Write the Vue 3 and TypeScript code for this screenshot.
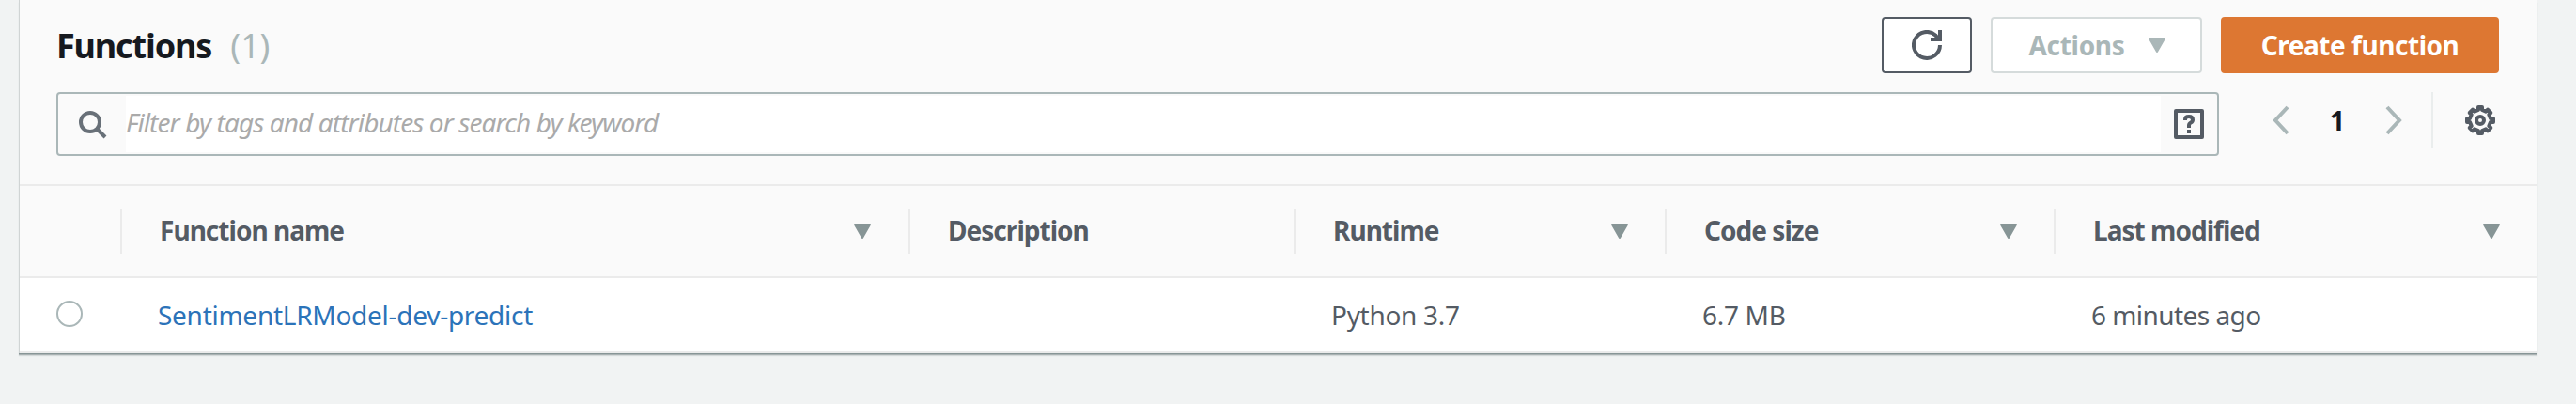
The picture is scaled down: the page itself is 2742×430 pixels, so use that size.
<script setup lang="ts">
interface Column {
  key: string
  label: string
  sortable: boolean
}

const columns: Column[] = [
  { key: 'name', label: 'Function name', sortable: true },
  { key: 'description', label: 'Description', sortable: false },
  { key: 'runtime', label: 'Runtime', sortable: true },
  { key: 'size', label: 'Code size', sortable: true },
  { key: 'modified', label: 'Last modified', sortable: true },
]

const rows: Record<string, string>[] = [
  {
    name: 'SentimentLRModel-dev-predict',
    description: '',
    runtime: 'Python 3.7',
    size: '6.7 MB',
    modified: '6 minutes ago',
  },
]
</script>

<template>
  <div class="page">
    <section class="panel">
      <header class="top">
        <h2><span class="title">Functions</span><span class="count">(1)</span></h2>
        <div class="buttons">
          <button class="btn refresh" aria-label="Refresh">
            <svg width="32" height="32" viewBox="0 0 16 16" fill="none" stroke="currentColor" stroke-width="2">
              <path d="M15 8a7 7 0 1 1-2.4-5.300L14 4.600" /><path d="M15 0v5h-5" />
            </svg>
          </button>
          <button class="btn actions"><span>Actions</span>
            <svg width="20" height="16" viewBox="0 0 20 16"><path d="M2 1h16L10 15z" fill="currentColor" stroke="currentColor" stroke-width="2" stroke-linejoin="round" /></svg>
          </button>
          <button class="btn create"><span>Create function</span></button>
        </div>
      </header>
      <div class="tools">
        <div class="search">
          <div class="lead">
            <svg width="32" height="32" viewBox="0 0 32 32" fill="none" stroke="currentColor" stroke-width="4"><circle cx="13" cy="13" r="10" /><path d="M20 20l9 9" /></svg>
          </div>
          <div class="input"><span>Filter by tags and attributes or search by keyword</span></div>
          <div class="help">
            <svg width="32" height="32" viewBox="0 0 32 32" fill="none" stroke="currentColor" stroke-width="4"><rect x="2" y="2" width="28" height="28" stroke-linejoin="round" /><path d="M12 12V11q0-3 4-3t4 3.500q0 2-2 3t-2 3V20M16 22v4" /></svg>
          </div>
        </div>
        <nav class="pager">
          <svg width="18" height="32" viewBox="0 0 18 32"><path d="M16 2L3 16l13 14" /></svg>
          <span class="current">1</span>
          <svg width="18" height="32" viewBox="0 0 18 32"><path d="M2 2l13 14L2 30" /></svg>
        </nav>
        <div class="settings">
          <svg width="32" height="32" viewBox="0 0 32 32" fill="none" stroke="currentColor" stroke-width="4" stroke-linejoin="round"><circle cx="16" cy="16" r="4" /><path d="M14 2h4v3l4 1.700 2-2 3.300 3.300-2 2L27 14h3v4h-3l-1.700 4 2 2-3.300 3.300-2-2-4 1.700v3h-4v-3l-4-1.700-2 2L4.700 24l2-2L5 18H2v-4h3l1.700-4-2-2L8 4.700l2 2L14 5z" /></svg>
        </div>
      </div>
      <div class="grid head">
        <div></div>
        <div v-for="c in columns" :key="c.key" class="th">
          <span :class="c.key">{{ c.label }}</span>
          <svg v-if="c.sortable" width="20" height="16" viewBox="0 0 20 16"><path d="M2 1h16L10 15z" fill="currentColor" stroke="currentColor" stroke-width="2" stroke-linejoin="round" /></svg>
        </div>
      </div>
      <div v-for="r in rows" :key="r.name" class="grid row">
        <div class="pick"><i></i></div>
        <div v-for="c in columns" :key="c.key" class="td"><span :class="c.key">{{ r[c.key] }}</span></div>
      </div>
    </section>
  </div>
</template>

<style>
body { margin: 0; background: #f2f3f3; }
</style>

<style scoped>
* { box-sizing: border-box; }
.page { height: 430px; padding: 0 41px 0 20px; overflow: hidden; background: #f1f3f3; color: #545b64; font: 28px/44px "Noto Sans", sans-serif; }
.panel { height: 376px; border: solid #d0d4d4; border-width: 0 1px; background: #fafafa; box-shadow: 0 1px 0 #879596, 0 2px 0 #aab2b3, 0 3px 1px #d5dada; }
svg { display: block; flex: none; }
span { white-space: nowrap; }
.top { height: 98px; padding: 18px 40px 0 39px; display: flex; justify-content: space-between; align-items: flex-start; }
h2 { margin: 7px 0 0; display: flex; font-size: 36px; line-height: 48px; color: #16191f; }
.title { letter-spacing: -1.15px; }
.count { margin-left: 20px; font-weight: 400; color: #aab7b8; }
.buttons { display: flex; gap: 20px; }
.btn { height: 60px; margin: 0; padding: 0; display: flex; align-items: center; justify-content: center; border: 2px solid #545b64; border-radius: 4px; background: #fff; color: #545b64; font: 700 28px/40px "Noto Sans", sans-serif; }
.refresh { width: 96px; }
.actions { width: 225px; padding-left: 2px; gap: 24px; border-color: #d5dbdb; color: #aab7b8; letter-spacing: -0.3px; }
.create { width: 296px; border-color: #dd7732; background: #dd7732; color: #fff; letter-spacing: -0.45px; }
.tools { height: 98px; padding: 0 40px 0 39px; display: flex; align-items: flex-start; }
.search { width: 2302px; height: 68px; display: flex; border: 2px solid #aab7b8; border-radius: 4px; }
.lead { width: 72px; padding: 17px 0 0 21px; color: #687078; }
.input { flex: 1; margin: 2px 0; background: #fff; color: #aaa; font-style: italic; line-height: 56px; letter-spacing: -0.9px; }
.help { width: 60px; padding: 16px 0 0 14px; color: #545b64; }
.pager { margin: 14px 0 0 57px; display: flex; align-items: center; color: #16191f; font-weight: 700; line-height: 32px; }
.pager path { fill: none; stroke: #aab7b8; stroke-width: 4; }
.current { width: 102px; text-align: center; }
.settings { height: 60px; margin-left: 31px; padding: 14px 0 0 34px; border-left: 2px solid #eaeded; }
.grid { display: grid; grid-template-columns: 107px 839px 410px 395px 414px 514px; }
.head { height: 100px; padding-top: 24px; border: solid #ebebeb; border-width: 2px 0; }
.th { height: 48px; padding: 0 38px 0 40px; display: flex; align-items: center; justify-content: space-between; border-left: 2px solid #ebebeb; font-weight: 700; letter-spacing: -0.97px; }
.th:nth-child(2) { padding-right: 39px; }
.th span { margin-top: -2px; }
.th svg { color: #879596; }
.row { height: 80px; background: #fff; border-bottom: 2px solid #ebebeb; }
.td { padding: 17px 0 0 40px; letter-spacing: -0.3px; }
.td .name { color: #2b73b9; letter-spacing: -0.27px; }
.td .modified { letter-spacing: -0.55px; }
.pick { padding: 24px 0 0 39px; }
.pick i { display: block; width: 28px; height: 28px; border: 2px solid #aab7b8; border-radius: 50%; }
</style>
